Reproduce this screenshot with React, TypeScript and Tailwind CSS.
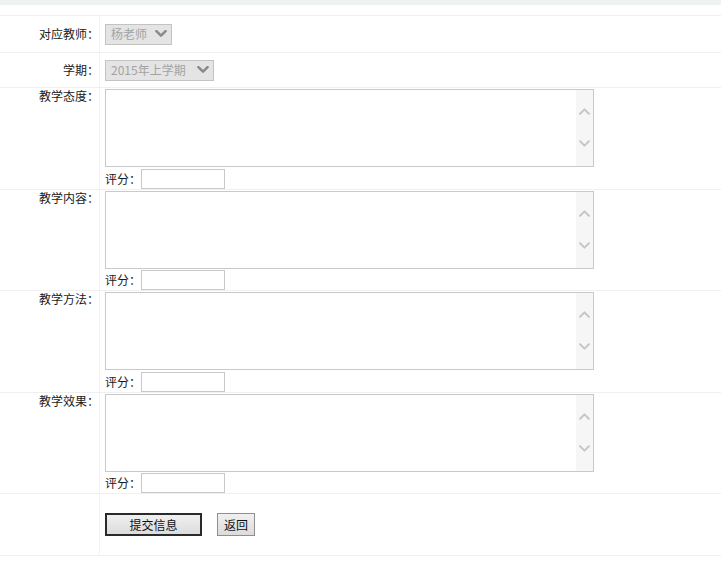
import React from "react";

const font = { fontFamily: '"Noto Sans CJK SC", "Noto Sans", sans-serif' };

function Chevron({ up, color, w = 10, h = 7, sw = 2 }: { up?: boolean; color: string; w?: number; h?: number; sw?: number }) {
  return (
    <svg width={w} height={h} viewBox="0 0 10 7" fill="none">
      <path
        d={up ? "M1 6 L5 2 L9 6" : "M1 1 L5 5 L9 1"}
        stroke={color}
        strokeWidth={sw}
        strokeLinecap="round"
        strokeLinejoin="round"
      />
    </svg>
  );
}

function FakeSelect({ text, width }: { text: string; width: string }) {
  return (
    <div
      className={`${width} h-[21px] flex items-center justify-between border border-[#c3c3c3] bg-[#e4e4e4] pl-[5px] pr-[4px] text-[12px] text-[#a3a3a3]`}
    >
      <span className="leading-[14px]">{text}</span>
      <Chevron color="#8a8a8a" w={12} h={8} sw={2.2} />
    </div>
  );
}

function TextBox() {
  return (
    <div className="w-[489px] h-[78px] border border-[#c9c9c9] bg-white flex justify-end">
      <div className="w-[17px] h-full bg-[#f6f6f6] flex flex-col items-center pt-[17px] gap-[25px]">
        <Chevron up color="#c6c6c6" w={11} h={8} sw={1.8} />
        <Chevron color="#c6c6c6" w={11} h={8} sw={1.8} />
      </div>
    </div>
  );
}

function TextRow({ label, tall }: { label: string; tall?: boolean }) {
  return (
    <div className={`flex border-b border-[#f0f0f0] ${tall ? "h-[102px]" : "h-[101px]"}`}>
      <div className="w-[100px] shrink-0 border-r border-[#f3f3f3] text-right text-[12px] leading-[14px] text-[#1a1a1a] pt-[1px]">
        {label}
      </div>
      <div className={`flex-1 pl-[5px] pt-[1px] flex flex-col ${tall ? "gap-[2px]" : "gap-[1px]"}`}>
        <TextBox />
        <div className="flex items-center h-[20px]">
          <span className="text-[12px] leading-[14px] text-[#1a1a1a] w-[36px]">评分：</span>
          <div className="w-[84px] h-[20px] border border-[#c9c9c9] bg-white" />
        </div>
      </div>
    </div>
  );
}

export default function App() {
  return (
    <div className="w-[721px] h-[566px] bg-white overflow-hidden" style={font}>
      <div className="h-[5px] bg-[#eef2f0]" />
      <div className="h-[10px]" />
      <div className="border-t border-[#f0f0f0]">
        <div className="flex h-[37px] border-b border-[#f0f0f0]">
          <div className="w-[100px] shrink-0 border-r border-[#f3f3f3] flex items-center justify-end text-[12px] text-[#1a1a1a]">
            对应教师：
          </div>
          <div className="flex-1 pl-[5px] flex items-center">
            <FakeSelect text="杨老师" width="w-[67px]" />
          </div>
        </div>
        <div className="flex h-[35px] border-b border-[#f0f0f0]">
          <div className="w-[100px] shrink-0 border-r border-[#f3f3f3] flex items-center justify-end text-[12px] text-[#1a1a1a]">
            学期：
          </div>
          <div className="flex-1 pl-[5px] flex items-center">
            <FakeSelect text="2015年上学期" width="w-[109px]" />
          </div>
        </div>
        <TextRow label="教学态度：" tall />
        <TextRow label="教学内容：" />
        <TextRow label="教学方法：" tall />
        <TextRow label="教学效果：" />
        <div className="flex h-[62px] border-b border-[#f0f0f0]">
          <div className="w-[100px] shrink-0 border-r border-[#f3f3f3]" />
          <div className="flex-1 pl-[5px] pt-[19px] flex items-start gap-[15px]">
            <button className="w-[97px] h-[23px] border-2 border-[#2a2a2a] bg-gradient-to-b from-[#f0f0f0] to-[#dcdcdc] text-[12px] text-[#111] leading-[14px]">
              提交信息
            </button>
            <button className="w-[38px] h-[23px] border border-[#8f8f8f] bg-gradient-to-b from-[#f0f0f0] to-[#dcdcdc] text-[12px] text-[#111] leading-[14px]">
              返回
            </button>
          </div>
        </div>
      </div>
    </div>
  );
}
